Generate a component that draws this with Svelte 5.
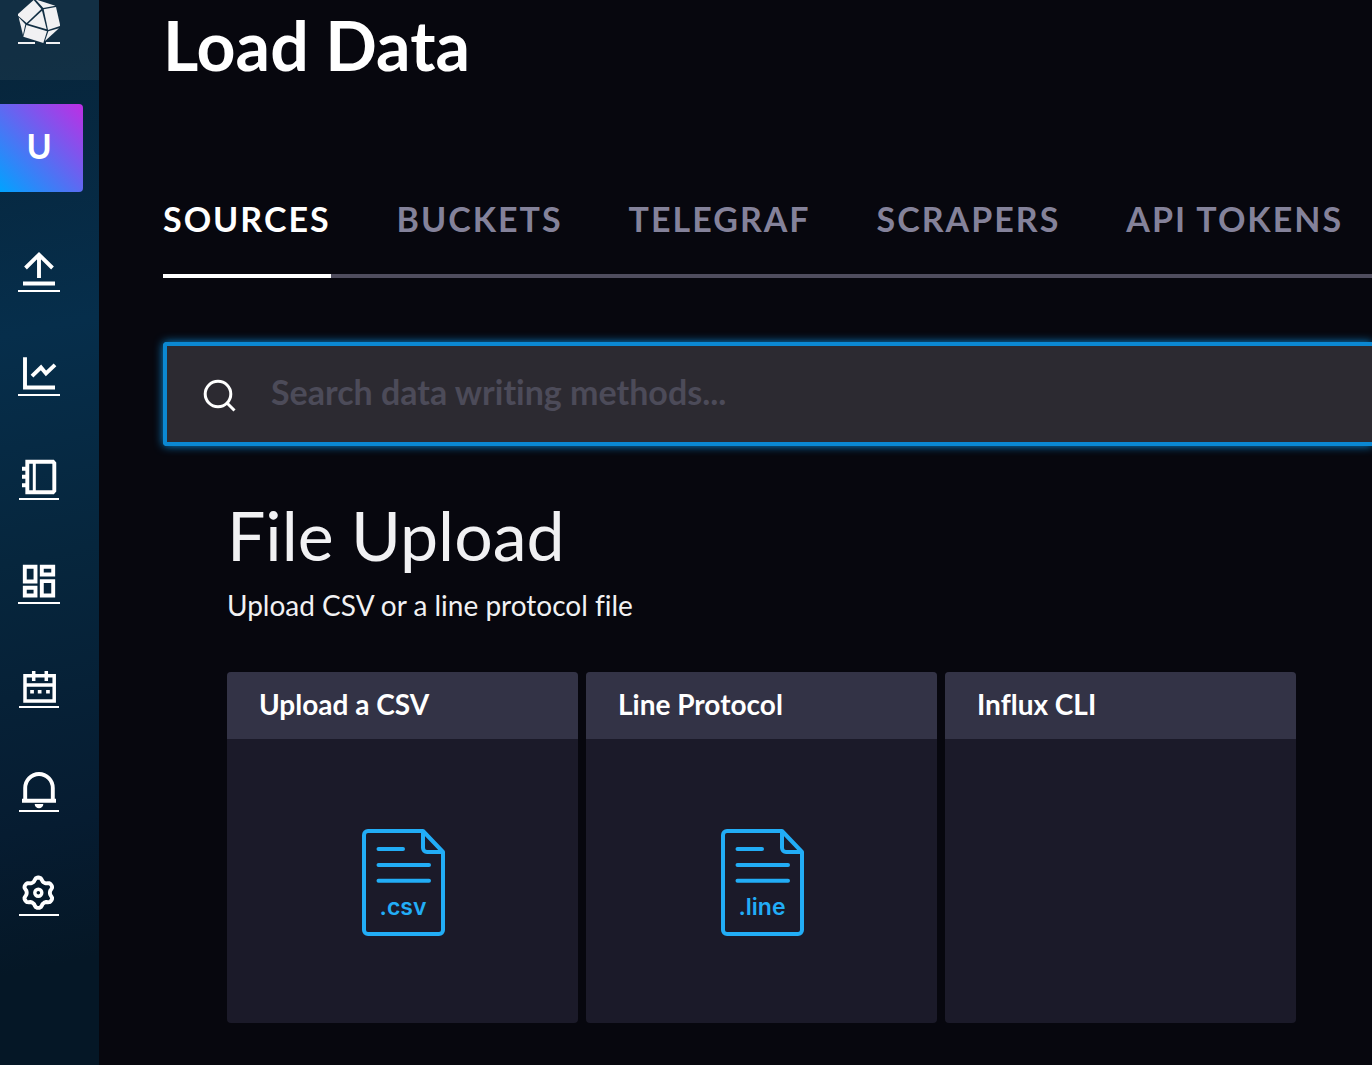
<script>
  const gear = (() => {
    const points = [];
    for (let deg = 0; deg < 360; deg += 5) {
      const a = (deg * Math.PI) / 180;
      const wave = -Math.cos(6 * a);
      const r = 13.4 + 1.9 * Math.tanh(1.6 * wave);
      points.push(`${(20.3 + r * Math.cos(a)).toFixed(1)},${(18.7 + r * Math.sin(a)).toFixed(1)}`);
    }
    return points.join(' ');
  })();

  const links = ['Load Data', 'Data Explorer', 'Notebooks', 'Dashboards', 'Tasks', 'Alerts', 'Settings'];
  const tabs = ['Sources', 'Buckets', 'Telegraf', 'Scrapers', 'API Tokens'];
  const cards = [
    { title: 'Upload a CSV', ext: '.csv' },
    { title: 'Line Protocol', ext: '.line' },
    { title: 'Influx CLI', ext: '' }
  ];
</script>

<div class="app">
  <nav class="sidebar" aria-label="Main">
    <a class="logo" href="#home" aria-label="Home">
      <svg viewBox="54 0 126 132" fill="#f1f1f3">
        <path d="M54 42 101 0 124 27 80 69 54 47Z" />
        <path d="M106-2 166 17 130 24Z" />
        <path d="M131 28 168 21 181 78 144 90Z" />
        <path d="M126 32 140 88 84 71Z" />
        <path d="M56 52 76 73 69 105Z" />
        <path d="M79 75 141 94 130 129 70 110Z" />
        <path d="M145 94 177 85 135 123Z" />
        <path d="M54 126h51v6H54zM138 126h42v6h-42z" />
      </svg>
    </a>
    <button class="org">U</button>
    <ul>
      {#each links as label, i}
        <li>
          <a href="#nav-{i}" aria-label={label}>
            <svg viewBox="0 0 42 42" fill="none" stroke="#fff" stroke-width="3.9">
              {#if i === 0}
                <path d="M21 28V5M7.5 18 21 4.7 34.5 18M5 33.5h32" />
              {:else if i === 1}
                <path d="M7 3.3v30.2h30M14 22.2l9-8.8 5 6 9-8.6" />
              {:else if i === 2}
                <path d="M9.3 3.8H35l1.3 1.5v27.4L35 34.2H9.3zM4 10.7h5M4 18.7h5M4 27.3h5" />
                <path d="M16.3 4v30" stroke-width="3" />
              {:else if i === 3}
                <path d="M6.8 4.8h10.7v14.7H6.8zM23.8 4.8h11.4v7.7H23.8zM6.8 25.8h10.7v7.7H6.8zM23.8 19.1h11.4v14.4H23.8z" />
              {:else if i === 4}
                <path d="M7 9.8h29.2V35H7zM7 19h29.2M15.7 5v10M28.3 5v10M12.2 25.7h3.7M19.8 25.7h3.7M28.1 25.7h3.7" stroke-width="3.5" />
              {:else if i === 5}
                <path d="M7.2 30V18a13.8 14 0 0 1 27.6 0v12M4 30.7h34" />
                <path d="M16.7 34h8.6a4.3 4.3 0 0 1-8.6 0z" fill="#fff" stroke="none" />
              {:else}
                <polygon points={gear} stroke-linejoin="round" />
                <circle cx="20.3" cy="18.7" r="3.5" stroke-width="3.4" />
              {/if}
              <path d={[0, 1, 3].includes(i) ? 'M0 41h42' : 'M1 41h40'} stroke-width="2" />
            </svg>
          </a>
        </li>
      {/each}
    </ul>
  </nav>

  <main>
    <h1>Load Data</h1>
    <div class="tabs" role="tablist">
      {#each tabs as tab, i}
        <button role="tab" aria-selected={i === 0} class:active={i === 0}>{tab}</button>
      {/each}
    </div>

    <label class="search">
      <svg viewBox="0 0 34 34" fill="none" stroke="#fff" stroke-width="3">
        <circle cx="15" cy="15" r="12.8" />
        <path d="M24 24l7.5 7.5" />
      </svg>
      <input type="text" aria-label="Search data writing methods" placeholder="Search data writing methods..." />
    </label>

    <section>
      <h2>File Upload</h2>
      <p>Upload CSV or a line protocol file</p>
      <div class="cards">
        {#each cards as card}
          <a class="card" href="#{card.title}">
            <h3>{card.title}</h3>
            <div class="thumb">
              {#if card.ext}
                <svg viewBox="0 0 84 108" fill="none" stroke="#22adf6" stroke-width="4" stroke-linecap="round" stroke-linejoin="round">
                  <path d="M6 2h55L81 23v78a4 4 0 0 1-4 4H6a4 4 0 0 1-4-4V6a4 4 0 0 1 4-4z" />
                  <path d="M61 3v16a4 4 0 0 0 4 4h15" />
                  <path d="M16.5 20H41M16.5 36H67M16.5 51.8H67" />
                  <text x="41" y="86" text-anchor="middle">{card.ext}</text>
                </svg>
              {/if}
            </div>
          </a>
        {/each}
      </div>
    </section>
  </main>
</div>

<style>
  :global(body) {
    margin: 0;
    background: #07070e;
  }
  .app {
    display: flex;
    min-height: 100vh;
    overflow: hidden;
    color: #fff;
    font-family: Lato, 'Open Sans', sans-serif;
    font-variant-ligatures: none;
  }
  svg {
    display: block;
  }
  a {
    color: inherit;
    text-decoration: none;
  }
  button {
    border: 0;
    color: inherit;
    font: inherit;
    cursor: pointer;
  }
  .sidebar {
    flex: 0 0 99px;
    background: linear-gradient(168deg, #07253b 5%, #062e4b 31%, #06263d 52%, #061c31 77%, #051726 90%);
  }
  .logo {
    display: block;
    height: 80px;
    padding-left: 18px;
    box-sizing: border-box;
    background: rgba(241, 241, 243, 0.05);
  }
  .logo svg {
    width: 42px;
    height: 44px;
  }
  .org {
    display: block;
    width: 83px;
    height: 88px;
    margin: 24px 0 27px;
    padding: 0 5px 6px 0;
    border-radius: 0 4px 4px 0;
    background: linear-gradient(45deg, #00a3ff, #be2ee4);
    font-size: 34px;
    font-weight: 700;
  }
  ul {
    margin: 0;
    padding: 0;
    list-style: none;
  }
  li {
    display: flex;
    align-items: center;
    height: 104px;
    padding-left: 18px;
  }
  li svg {
    width: 42px;
    height: 42px;
  }
  main {
    flex: 1;
    min-width: 0;
    padding-left: 64px;
  }
  h1 {
    margin: 5px 0 87px;
    font-size: 68px;
    line-height: 80px;
    font-weight: 700;
  }
  .tabs {
    display: flex;
    gap: 66px;
    border-bottom: 4px solid #4f4d5e;
  }
  .tabs button {
    flex: none;
    height: 106px;
    margin-bottom: -4px;
    padding: 0 0 10px;
    border-bottom: 4px solid transparent;
    background: none;
    color: #84829a;
    font-size: 34px;
    font-weight: 700;
    letter-spacing: 2px;
    text-transform: uppercase;
  }
  .tabs .active {
    border-color: #fff;
    color: #fff;
  }
  .search {
    display: flex;
    align-items: center;
    gap: 34px;
    height: 96px;
    margin-top: 64px;
    padding-left: 36px;
    border: 4px solid #0b88d2;
    border-right: 0;
    border-radius: 4px 0 0 4px;
    background: #2c2a31;
    box-shadow: 0 0 10px #0b88d2;
  }
  .search svg {
    flex: none;
    width: 34px;
    height: 34px;
    padding-top: 4px;
  }
  .search input {
    flex: 1;
    min-width: 0;
    padding: 0 0 6px;
    border: 0;
    outline: 0;
    background: none;
    color: #fff;
    font: 700 34px Lato, 'Open Sans', sans-serif;
    font-variant-ligatures: none;
  }
  .search input::placeholder {
    color: #4c4b59;
    opacity: 1;
  }
  section {
    padding: 49px 76px 42px 64px;
    color: #f1f1f3;
  }
  h2 {
    margin: 0;
    font-size: 68px;
    line-height: 80px;
    font-weight: 400;
  }
  p {
    margin: 14px 0 51px;
    font-size: 28px;
    line-height: 32px;
  }
  .cards {
    display: grid;
    grid-template-columns: repeat(3, 1fr);
    gap: 8px;
  }
  .card {
    display: flex;
    flex-direction: column;
    aspect-ratio: 1;
    border-radius: 4px;
    overflow: hidden;
    background: #1b1a29;
    color: #fff;
  }
  h3 {
    margin: 0;
    padding: 0 32px 3px;
    background: #333346;
    font-size: 28px;
    line-height: 64px;
    font-weight: 700;
  }
  .thumb {
    display: grid;
    flex: 1;
    place-items: center;
    padding: 4px 0 0 2px;
  }
  .thumb svg {
    width: 84px;
    height: 108px;
  }
  .thumb text {
    fill: #22adf6;
    stroke: none;
    font: 600 23px Inter, sans-serif;
  }
</style>
